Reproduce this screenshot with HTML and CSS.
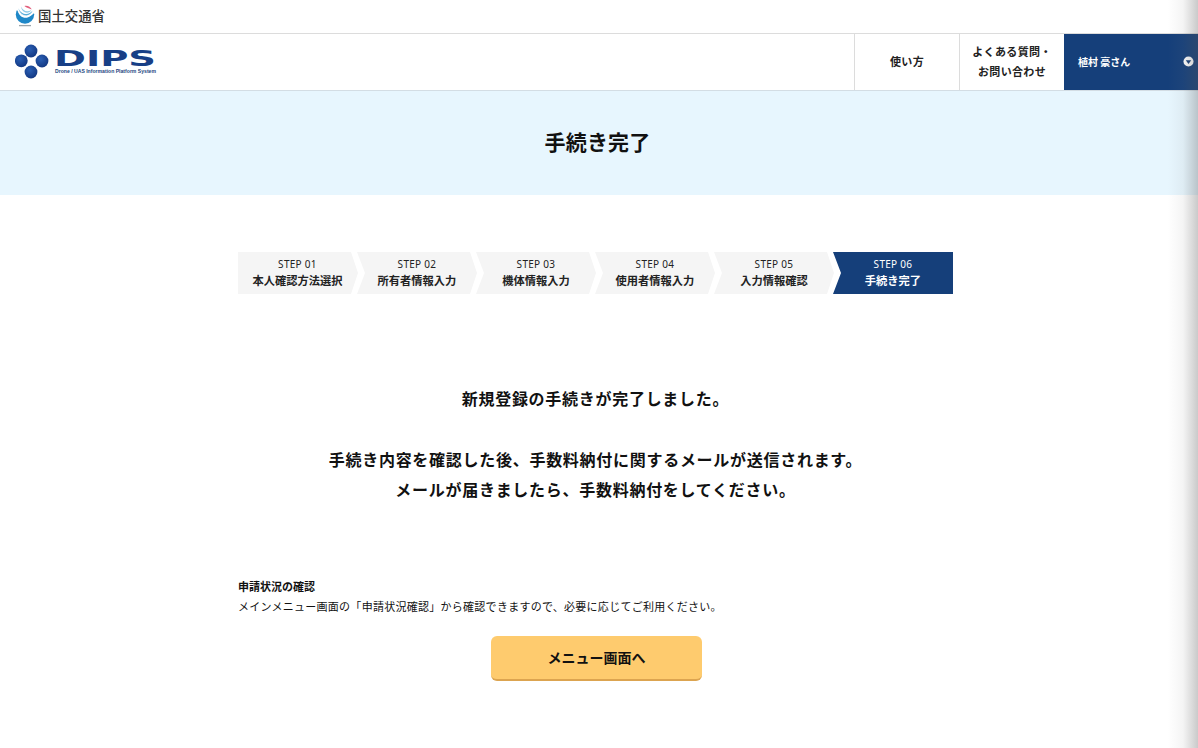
FILE: index.html
```html
<!DOCTYPE html>
<html lang="ja">
<head>
<meta charset="utf-8">
<title>手続き完了</title>
<link rel="stylesheet" href="styles.css">
</head>
<body>
<div class="topbar">
  <svg class="mlit-icon" viewBox="0 0 20 24" width="20" height="24" aria-hidden="true">
    <circle cx="10" cy="9.5" r="9.2" fill="#1f88c8"/>
    <path d="M0 0H20V6.5C17.5 12.5 6 13.5 1.8 4.5L0 4Z" fill="#fff"/>
    <path d="M2.4 4.2C5 11.5 15 13 18.4 6.2C16.5 15 4 15.5 2.4 4.2Z" fill="#fff"/>
    <path d="M3.4 3.2C6 9.6 13.6 11.2 17.6 5.6C15.8 12.2 5.6 12.6 3.4 3.2Z" fill="#58aedb"/>
    <path d="M6 1.6C8 6.2 12.6 7.6 16.2 5C14.4 9.2 7 9 6 1.6Z" fill="#8fcbe8"/>
    <path d="M9.4 .9C12.4 .2 15.6 1.6 16.8 4.4C14.2 3 11.6 2.8 9.4 .9Z" fill="#e2607e"/>
    <path d="M4 20.6h12" stroke="#9aa4aa" stroke-width="1.3"/>
  </svg>
  <span class="mlit-name">国土交通省</span>
</div>
<header class="header">
  <div class="brand">
    <svg class="dips-logo" viewBox="0 0 142 36" width="142" height="36">
      <defs>
        <radialGradient id="ball" cx="40%" cy="35%" r="75%">
          <stop offset="0" stop-color="#2a5fb4"/>
          <stop offset="1" stop-color="#10337c"/>
        </radialGradient>
      </defs>
      <circle cx="16" cy="7" r="6.4" fill="url(#ball)"/>
      <circle cx="6.3" cy="16.8" r="6.4" fill="url(#ball)"/>
      <circle cx="27" cy="17" r="6.4" fill="url(#ball)"/>
      <circle cx="16" cy="28" r="6.4" fill="url(#ball)"/>
      <text class="dips-word" x="39" y="21.5" textLength="102" lengthAdjust="spacingAndGlyphs">DIPS</text>
      <text class="dips-tag" x="40" y="28.5" textLength="101" lengthAdjust="spacingAndGlyphs">Drone / UAS Information Platform System</text>
    </svg>
  </div>
  <nav class="nav">
    <a class="nav-item nav-how">使い方</a>
    <a class="nav-item nav-faq">よくある質問・<br>お問い合わせ</a>
    <a class="nav-user">
      <span>植村 豪さん</span>
      <svg viewBox="0 0 12 12" width="11" height="11" aria-hidden="true">
        <circle cx="6" cy="6" r="5.5" fill="#fff"/>
        <path d="M3 4.6h6L6 8.6z" fill="#153f7a"/>
      </svg>
    </a>
  </nav>
</header>
<section class="hero"><h1>手続き完了</h1></section>
<main class="main">
  <ol class="steps">
    <li class="step step-first"><span>STEP 01</span><b>本人確認方法選択</b></li>
    <li class="step"><span>STEP 02</span><b>所有者情報入力</b></li>
    <li class="step"><span>STEP 03</span><b>機体情報入力</b></li>
    <li class="step"><span>STEP 04</span><b>使用者情報入力</b></li>
    <li class="step"><span>STEP 05</span><b>入力情報確認</b></li>
    <li class="step step-current"><span>STEP 06</span><b>手続き完了</b></li>
  </ol>
  <div class="message">
    <p class="message-first">新規登録の手続きが完了しました。</p>
    <p>手続き内容を確認した後、手数料納付に関するメールが送信されます。</p>
    <p>メールが届きましたら、手数料納付をしてください。</p>
  </div>
  <div class="note">
    <h2>申請状況の確認</h2>
    <p>メインメニュー画面の「申請状況確認」から確認できますので、必要に応じてご利用ください。</p>
  </div>
  <div class="actions"><a class="button">メニュー画面へ</a></div>
</main>
<div class="edge-shade"></div>
</body>
</html>
```
FILE: styles.css
```css
* { box-sizing: border-box; }
html, body { margin: 0; padding: 0; }
body {
  width: 1198px;
  height: 748px;
  overflow: hidden;
  background: #fff;
  color: #111;
  font-family: "Noto Sans CJK JP", "Noto Sans", sans-serif;
  position: relative;
}
.topbar {
  height: 34px;
  border-bottom: 1px solid #dcdcdc;
  display: flex;
  align-items: center;
  padding-left: 15px;
  gap: 3px;
}
.mlit-icon { flex: none; }
.mlit-name { font-size: 13.4px; line-height: 20px; color: #333; font-weight: 500; margin-bottom: 3px; }
.header {
  height: 57px;
  border-bottom: 1px solid #d3dde4;
  display: flex;
  justify-content: space-between;
}
.brand { display: flex; align-items: center; padding-left: 15px; }
.dips-word {
  font-family: "DejaVu Sans", sans-serif;
  font-weight: 700;
  font-size: 21px;
  fill: #183f86;
}
.dips-tag {
  font-family: "Liberation Sans", sans-serif;
  font-size: 4.6px;
  font-weight: 700;
  fill: #24477f;
}
.nav { display: flex; height: 56px; }
.nav-item {
  width: 105px;
  border-left: 1px solid #dcdcdc;
  display: flex;
  align-items: center;
  justify-content: center;
  text-align: center;
  font-size: 11px;
  font-weight: 700;
  line-height: 20px;
  color: #222;
  letter-spacing: .35px;
  padding-bottom: 2px;
}
.nav-user {
  width: 134px;
  background: #153f7a;
  color: #fff;
  font-size: 10px;
  font-weight: 700;
  display: flex;
  align-items: center;
  justify-content: space-between;
  padding: 0 4px 2px 14px;
}
.hero {
  height: 104px;
  background: #e7f6fe;
  display: flex;
  align-items: center;
  justify-content: center;
  padding: 0 3px 4px 0;
}
.hero h1 { margin: 0; font-size: 21px; line-height: 30px; font-weight: 700; color: #111; letter-spacing: .2px; }
.main { width: 715px; margin-left: 238px; }
.steps {
  list-style: none;
  margin: 57px 0 0;
  padding: 0;
  display: flex;
}
.step {
  width: 120px;
  height: 42px;
  margin-right: -1px;
  background: #f5f5f5;
  clip-path: polygon(0 0, 113px 0, 120px 50%, 113px 100%, 0 100%, 8px 50%);
  display: flex;
  flex-direction: column;
  align-items: center;
  justify-content: center;
  color: #222;
  padding-bottom: 2px;
}
.step span { font-family: "Noto Sans", sans-serif; font-size: 10px; line-height: 16px; letter-spacing: .3px; }
.step b { font-size: 11.25px; line-height: 17px; font-weight: 700; }
.step-first { clip-path: polygon(0 0, 113px 0, 120px 50%, 113px 100%, 0 100%); padding-right: 1px; }
.step-current {
  margin-right: 0;
  background: #153f7a;
  color: #fff;
  clip-path: polygon(0 0, 100% 0, 100% 100%, 0 100%, 8px 50%);
}
.message { margin-top: 89px; text-align: center; font-size: 16px; font-weight: 700; line-height: 30px; letter-spacing: .72px; color: #111; }
.message p { margin: 0; }
.message-first { margin-bottom: 31px !important; }
.note { margin-top: 72px; font-size: 11px; line-height: 20px; letter-spacing: .27px; color: #111; }
.note h2 { margin: 0; font-size: 11px; line-height: 20px; font-weight: 700; letter-spacing: 0; }
.note p { margin: 0; }
.actions { margin-top: 20px; display: flex; justify-content: center; padding-left: 2px; }
.button {
  width: 211px;
  height: 45px;
  background: #fecb6e;
  border-radius: 6px;
  border-bottom: 2px solid #dca450;
  display: flex;
  align-items: center;
  justify-content: center;
  font-size: 14px;
  font-weight: 700;
  color: #111;
  padding-bottom: 1px;
}
.edge-shade {
  position: absolute;
  top: 0;
  right: 0;
  width: 30px;
  height: 748px;
  background: linear-gradient(to right, rgba(120,120,120,0), rgba(120,120,120,.08) 50%, rgba(90,90,90,.32));
  pointer-events: none;
}
```
